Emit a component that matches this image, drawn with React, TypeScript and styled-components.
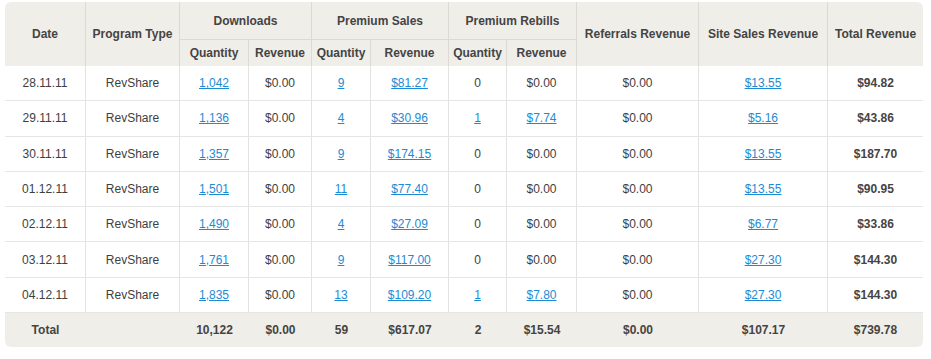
import styled, { createGlobalStyle } from 'styled-components'

interface IStatDay {
  date: string
  program: string
  dlQty: string
  dlRev: string
  psQty: string
  psRev: string
  prQty: string
  prRev: string
  referrals: string
  siteSales: string
  total: string
}

const days: IStatDay[] = [
  { date: '28.11.11', program: 'RevShare', dlQty: '1,042', dlRev: '$0.00', psQty: '9', psRev: '$81.27', prQty: '0', prRev: '$0.00', referrals: '$0.00', siteSales: '$13.55', total: '$94.82' },
  { date: '29.11.11', program: 'RevShare', dlQty: '1,136', dlRev: '$0.00', psQty: '4', psRev: '$30.96', prQty: '1', prRev: '$7.74', referrals: '$0.00', siteSales: '$5.16', total: '$43.86' },
  { date: '30.11.11', program: 'RevShare', dlQty: '1,357', dlRev: '$0.00', psQty: '9', psRev: '$174.15', prQty: '0', prRev: '$0.00', referrals: '$0.00', siteSales: '$13.55', total: '$187.70' },
  { date: '01.12.11', program: 'RevShare', dlQty: '1,501', dlRev: '$0.00', psQty: '11', psRev: '$77.40', prQty: '0', prRev: '$0.00', referrals: '$0.00', siteSales: '$13.55', total: '$90.95' },
  { date: '02.12.11', program: 'RevShare', dlQty: '1,490', dlRev: '$0.00', psQty: '4', psRev: '$27.09', prQty: '0', prRev: '$0.00', referrals: '$0.00', siteSales: '$6.77', total: '$33.86' },
  { date: '03.12.11', program: 'RevShare', dlQty: '1,761', dlRev: '$0.00', psQty: '9', psRev: '$117.00', prQty: '0', prRev: '$0.00', referrals: '$0.00', siteSales: '$27.30', total: '$144.30' },
  { date: '04.12.11', program: 'RevShare', dlQty: '1,835', dlRev: '$0.00', psQty: '13', psRev: '$109.20', prQty: '1', prRev: '$7.80', referrals: '$0.00', siteSales: '$27.30', total: '$144.30' },
]

const widths = [81, 94, 69, 63, 59, 78, 58, 70, 122, 129, 95]

const GlobalStyle = createGlobalStyle`
  body {
    margin: 0;
    background: #fff;
    font-family: "Liberation Sans", Arial, sans-serif;
  }
`

const Wrapper = styled.div`
  margin: 2px 0 0 5px;
  width: 918px;
  border-radius: 6px;
  overflow: hidden;
`

const StatsTable = styled.table`
  width: 918px;
  table-layout: fixed;
  border-collapse: separate;
  border-spacing: 0;
  font-size: 12px;
  color: #3e3e3e;
  text-align: center;
`

const Head = styled.thead`
  background: #f0eee9;
`

const HeadCell = styled.th<{ $h?: number; $last?: boolean; $bottom?: boolean }>`
  height: ${(p) => p.$h ?? 38}px;
  padding: 0;
  font-weight: bold;
  color: #444;
  border-right: ${(p) => (p.$last ? 'none' : '1px solid #dcdad4')};
  border-bottom: ${(p) => (p.$bottom ? '1px solid #dcdad4' : 'none')};
  box-sizing: border-box;
  vertical-align: middle;
`

const Row = styled.tr<{ $total?: boolean }>`
  background: ${(p) => (p.$total ? '#f0eee9' : '#fff')};
`

const Cell = styled.td<{ $last?: boolean; $bold?: boolean }>`
  height: 35.3px;
  padding: 0;
  box-sizing: border-box;
  border-right: ${(p) => (p.$last ? 'none' : '1px solid #e3e3e3')};
  border-bottom: 1px solid #e6e6e6;
  font-weight: ${(p) => (p.$bold ? 'bold' : 'normal')};
  color: ${(p) => (p.$bold ? '#444' : '#3e3e3e')};
`

const TotalCell = styled.td`
  height: 34px;
  padding: 0;
  font-weight: bold;
  color: #444;
`

const Link = styled.a`
  color: #1d8bd3;
  text-decoration: underline;
  cursor: pointer;
`

const DayRow: React.FC<{ day: IStatDay }> = ({ day }) => {
  return (
    <Row>
      <Cell>{day.date}</Cell>
      <Cell>{day.program}</Cell>
      <Cell><Link>{day.dlQty}</Link></Cell>
      <Cell>{day.dlRev}</Cell>
      <Cell><Link>{day.psQty}</Link></Cell>
      <Cell><Link>{day.psRev}</Link></Cell>
      <Cell>{day.prQty === '0' ? day.prQty : <Link>{day.prQty}</Link>}</Cell>
      <Cell>{day.prRev === '$0.00' ? day.prRev : <Link>{day.prRev}</Link>}</Cell>
      <Cell>{day.referrals}</Cell>
      <Cell><Link>{day.siteSales}</Link></Cell>
      <Cell $last $bold>{day.total}</Cell>
    </Row>
  )
}

export default function App() {
  return (
    <>
      <GlobalStyle />
      <Wrapper>
        <StatsTable>
          <colgroup>
            {widths.map((w, i) => (
              <col key={i} style={{ width: w }} />
            ))}
          </colgroup>
          <Head>
            <tr>
              <HeadCell rowSpan={2} $h={64}>Date</HeadCell>
              <HeadCell rowSpan={2} $h={64}>Program Type</HeadCell>
              <HeadCell colSpan={2} $bottom>Downloads</HeadCell>
              <HeadCell colSpan={2} $bottom>Premium Sales</HeadCell>
              <HeadCell colSpan={2} $bottom>Premium Rebills</HeadCell>
              <HeadCell rowSpan={2} $h={64}>Referrals Revenue</HeadCell>
              <HeadCell rowSpan={2} $h={64}>Site Sales Revenue</HeadCell>
              <HeadCell rowSpan={2} $h={64} $last>Total Revenue</HeadCell>
            </tr>
            <tr>
              <HeadCell $h={26}>Quantity</HeadCell>
              <HeadCell $h={26}>Revenue</HeadCell>
              <HeadCell $h={26}>Quantity</HeadCell>
              <HeadCell $h={26}>Revenue</HeadCell>
              <HeadCell $h={26}>Quantity</HeadCell>
              <HeadCell $h={26}>Revenue</HeadCell>
            </tr>
          </Head>
          <tbody>
            {days.map((day) => (
              <DayRow key={day.date} day={day} />
            ))}
            <Row $total>
              <TotalCell>Total</TotalCell>
              <TotalCell></TotalCell>
              <TotalCell>10,122</TotalCell>
              <TotalCell>$0.00</TotalCell>
              <TotalCell>59</TotalCell>
              <TotalCell>$617.07</TotalCell>
              <TotalCell>2</TotalCell>
              <TotalCell>$15.54</TotalCell>
              <TotalCell>$0.00</TotalCell>
              <TotalCell>$107.17</TotalCell>
              <TotalCell>$739.78</TotalCell>
            </Row>
          </tbody>
        </StatsTable>
      </Wrapper>
    </>
  )
}
